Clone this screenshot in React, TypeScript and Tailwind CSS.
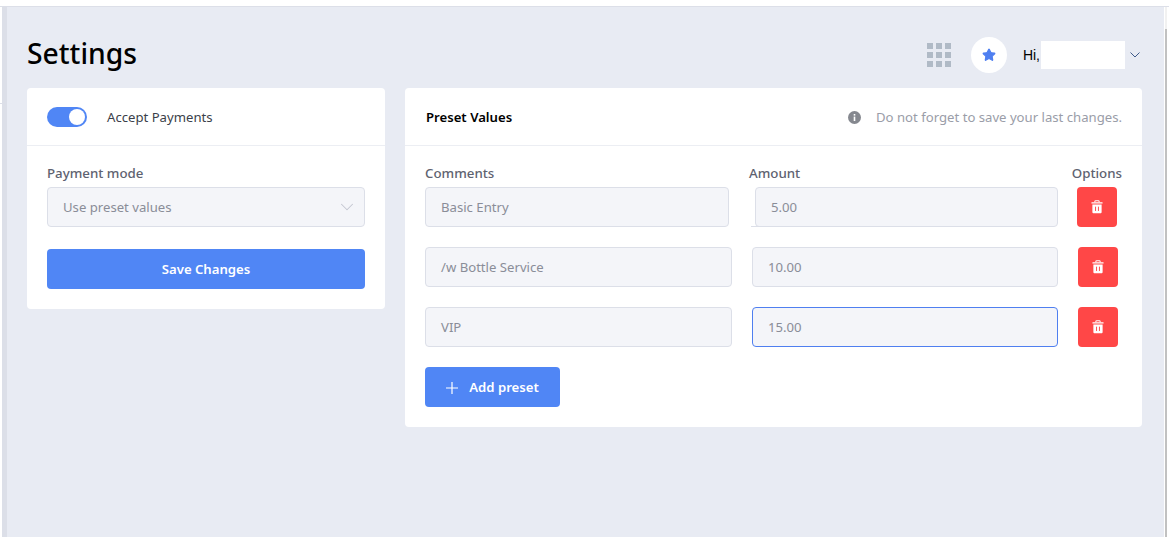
import { ChevronDown, Star } from "lucide-react";

const Trash = () => (
  <svg width="12" height="14" viewBox="0 0 14 16" fill="none">
    <path d="M4.5 2.5V1.6c0-.6.4-1 1-1h3c.6 0 1 .4 1 1v.9" stroke="#fff" strokeWidth="1.2" />
    <path d="M1 2.6h12c.3 0 .5.2.5.5v.9H.5v-.9c0-.3.2-.5.5-.5z" fill="#fff" />
    <path d="M1.6 5h10.8v8.9c0 .9-.6 1.5-1.5 1.5H3.1c-.9 0-1.5-.6-1.5-1.5V5z" fill="#fff" />
    <path d="M5.3 7.6v5M8.7 7.6v5" stroke="#ff4747" strokeWidth="1.1" />
  </svg>
);

const field =
  "flex h-10 items-center rounded border bg-[#f4f5f9] pt-[2px] pl-[15px] text-[13.15px] text-[#8a8d98]";

const rows = [
  { comment: "/w Bottle Service", amount: "10.00" },
  { comment: "VIP", amount: "15.00", focused: true },
];

function TrashButton({ className = "" }: { className?: string }) {
  return (
    <button className={`flex h-10 w-10 shrink-0 items-center justify-center rounded bg-[#ff4747] ${className}`}>
      <Trash />
    </button>
  );
}

export default function App() {
  return (
    <div className="flex h-[548px] flex-col overflow-hidden bg-white font-['Noto_Sans',sans-serif]">
      <div className="h-[7px] shrink-0 border-b border-[#dcdfe8]" />
      <div className="flex h-[530px] shrink-0">
        <div className="w-[2px] shrink-0 pt-[96px]">
          <div className="h-px bg-[#dcdfe8]" />
        </div>
        <div className="w-[5px] shrink-0 bg-[#dcdfe8]" />
        <main className="w-[1157px] shrink-0 bg-[#e8ebf3] pr-[22px] pl-5">
          <header className="flex h-[81px] items-center justify-between pt-[12px]">
            <h1 className="text-[28.25px] leading-none font-medium text-black">Settings</h1>
            <div className="flex items-center pt-[3px]">
              <div className="grid grid-cols-3 gap-[3px]">
                {Array.from({ length: 9 }).map((_, i) => (
                  <span key={i} className="h-[6px] w-[6px] bg-[#b0bac6]" />
                ))}
              </div>
              <div className="ml-5 flex h-9 w-9 items-center justify-center rounded-full bg-white">
                <Star size={14} className="fill-[#4f7ff0] text-[#4f7ff0]" />
              </div>
              <span className="ml-4 font-['Liberation_Sans',sans-serif] text-[14px] text-black">Hi,</span>
              <div className="ml-px h-7 w-[84px] bg-white" />
              <svg width="12" height="8" viewBox="0 0 12 8" fill="none" className="mr-px ml-1">
                <path d="M1.5 1.5 6 6 10.5 1.5" stroke="#3f5a8a" strokeWidth="1" />
              </svg>
            </div>
          </header>

          <div className="flex items-start gap-5">
            <section className="w-[358px] rounded bg-white">
              <div className="flex h-[58px] items-center border-b border-[#eceef3] px-5">
                <div className="flex h-5 w-10 items-center justify-end rounded-full bg-[#5086f5] pr-[2px]">
                  <span className="h-4 w-4 rounded-full bg-white" />
                </div>
                <span className="ml-5 pt-[2px] text-[13.15px] text-[#3b3f4a]">Accept Payments</span>
              </div>
              <div className="px-5 pt-[17px] pb-5">
                <div className="text-[13.3px] leading-[20px] font-medium text-[#5e6270]">Payment mode</div>
                <div className={`${field} mt-[4px] justify-between border-[#dcdfe8] pr-[6px]`}>
                  <span>Use preset values</span>
                  <ChevronDown size={22} strokeWidth={1.1} className="-mt-[2px] text-[#c3c6d0]" />
                </div>
                <button className="mt-[22px] h-10 w-full rounded bg-[#5086f5] pt-px text-[13.15px] font-semibold text-white">
                  Save Changes
                </button>
              </div>
            </section>

            <section className="w-[737px] rounded bg-white">
              <div className="flex h-[58px] items-center justify-between border-b border-[#eceef3] px-5">
                <span className="pt-[2px] pl-px text-[13.15px] font-semibold text-black">Preset Values</span>
                <div className="flex items-center gap-[15px] pt-[2px] text-[13.15px] text-[#9a9da8]">
                  <svg width="13" height="13" viewBox="0 0 13 13">
                    <circle cx="6.5" cy="6.5" r="6.5" fill="#85888f" />
                    <rect x="5.7" y="5.6" width="1.6" height="4.4" fill="#fff" />
                    <rect x="5.7" y="3" width="1.6" height="1.6" fill="#fff" />
                  </svg>
                  <span>Do not forget to save your last changes.</span>
                </div>
              </div>
              <div className="px-5 pt-[17px] pb-5">
                <div className="flex text-[13.3px] leading-[20px] font-medium text-[#5e6270]">
                  <span className="w-[324px]">Comments</span>
                  <span className="flex-1">Amount</span>
                  <span>Options</span>
                </div>
                <div className="mt-[4px] flex">
                  <div className={`${field} w-[304px] border-[#dcdfe8]`}>Basic Entry</div>
                  <div className="relative ml-[26px] w-[303px]">
                    <div className={`${field} border-[#dcdfe8]`}>5.00</div>
                    <span className="absolute bottom-0 -left-1 h-px w-[299px] bg-[#dcdfe8]" />
                  </div>
                  <TrashButton className="ml-[19px]" />
                </div>
                {rows.map((row) => (
                  <div key={row.amount} className="mt-5 flex gap-5">
                    <div className={`${field} w-[307px] border-[#dcdfe8]`}>{row.comment}</div>
                    <div className={`${field} w-[306px] ${row.focused ? "border-[#4f7ff0]" : "border-[#dcdfe8]"}`}>
                      {row.amount}
                    </div>
                    <TrashButton />
                  </div>
                ))}
                <button className="mt-5 flex h-10 w-[135px] items-center justify-center gap-[11px] rounded bg-[#5086f5] pt-px text-[13.15px] font-semibold text-white">
                  <svg width="12" height="12" viewBox="0 0 12 12" fill="none">
                    <path d="M6 0v12M0 6h12" stroke="#fff" strokeWidth="1.2" />
                  </svg>
                  Add preset
                </button>
              </div>
            </section>
          </div>
        </main>
        <div className="ml-px flex w-[2px] shrink-0 flex-col">
          <div className="h-[22px] bg-[#f1f1f1]" />
          <div className="flex-1 bg-[#c1c1c1]" />
        </div>
      </div>
    </div>
  );
}
